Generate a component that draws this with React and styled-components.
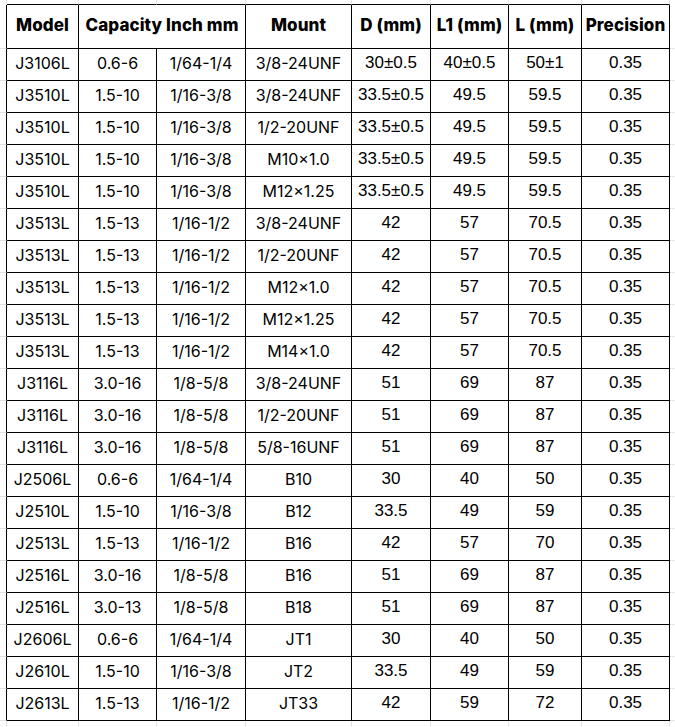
import React from 'react';
import styled, { createGlobalStyle } from 'styled-components';

const GlobalStyle = createGlobalStyle`
  html, body {
    margin: 0;
    padding: 0;
    background: #fff;
  }
`;

const widths = [7, 72, 78, 89, 106, 79, 78, 73, 88, 5];

const rows = [
  ['J3106L', '0.6-6', '1/64-1/4', '3/8-24UNF', '30±0.5', '40±0.5', '50±1'],
  ['J3510L', '1.5-10', '1/16-3/8', '3/8-24UNF', '33.5±0.5', '49.5', '59.5'],
  ['J3510L', '1.5-10', '1/16-3/8', '1/2-20UNF', '33.5±0.5', '49.5', '59.5'],
  ['J3510L', '1.5-10', '1/16-3/8', 'M10×1.0', '33.5±0.5', '49.5', '59.5'],
  ['J3510L', '1.5-10', '1/16-3/8', 'M12×1.25', '33.5±0.5', '49.5', '59.5'],
  ['J3513L', '1.5-13', '1/16-1/2', '3/8-24UNF', '42', '57', '70.5'],
  ['J3513L', '1.5-13', '1/16-1/2', '1/2-20UNF', '42', '57', '70.5'],
  ['J3513L', '1.5-13', '1/16-1/2', 'M12×1.0', '42', '57', '70.5'],
  ['J3513L', '1.5-13', '1/16-1/2', 'M12×1.25', '42', '57', '70.5'],
  ['J3513L', '1.5-13', '1/16-1/2', 'M14×1.0', '42', '57', '70.5'],
  ['J3116L', '3.0-16', '1/8-5/8', '3/8-24UNF', '51', '69', '87'],
  ['J3116L', '3.0-16', '1/8-5/8', '1/2-20UNF', '51', '69', '87'],
  ['J3116L', '3.0-16', '1/8-5/8', '5/8-16UNF', '51', '69', '87'],
  ['J2506L', '0.6-6', '1/64-1/4', 'B10', '30', '40', '50'],
  ['J2510L', '1.5-10', '1/16-3/8', 'B12', '33.5', '49', '59'],
  ['J2513L', '1.5-13', '1/16-1/2', 'B16', '42', '57', '70'],
  ['J2516L', '3.0-16', '1/8-5/8', 'B16', '51', '69', '87'],
  ['J2516L', '3.0-13', '1/8-5/8', 'B18', '51', '69', '87'],
  ['J2606L', '0.6-6', '1/64-1/4', 'JT1', '30', '40', '50'],
  ['J2610L', '1.5-10', '1/16-3/8', 'JT2', '33.5', '49', '59'],
  ['J2613L', '1.5-13', '1/16-1/2', 'JT33', '42', '59', '72'],
];

const Sheet = styled.table`
  border-collapse: separate;
  border-spacing: 0;
  table-layout: fixed;
  width: 675px;
`;

const Gutter = styled.td`
  box-sizing: border-box;
  padding: 0;
  height: ${(p) => p.$h}px;
  border-right: 1px solid ${(p) => p.$right || 'transparent'};
  border-bottom: 1px solid ${(p) => p.$bottom || 'transparent'};
`;

const HeadCell = styled.th`
  box-sizing: border-box;
  height: 44px;
  padding: 0 0 3px;
  border-right: 1px solid #000;
  border-bottom: 1px solid #000;
  font-family: Inter, 'Liberation Sans', sans-serif;
  font-weight: 800;
  font-size: 17px;
  letter-spacing: 0.1px;
  color: #000;
  text-align: center;
  vertical-align: middle;
  white-space: nowrap;
  overflow: hidden;
`;

const Cell = styled.td`
  box-sizing: border-box;
  height: 32px;
  padding: 0 0 3px;
  border-right: 1px solid #000;
  border-bottom: 1px solid #000;
  font-family: ${(p) =>
    p.$plain
      ? "'Liberation Sans', Arial, sans-serif"
      : "Inter, 'Liberation Sans', sans-serif"};
  font-size: ${(p) => (p.$plain ? 17 : 16)}px;
  color: #000;
  text-align: center;
  vertical-align: middle;
  white-space: nowrap;
  overflow: hidden;
`;

const GRID = '#e2e2e2';

const App = () => {
  const heads = ['D (mm)', 'L1 (mm)', 'L (mm)', 'Precision'];
  return (
    <>
      <GlobalStyle />
      <Sheet>
        <colgroup>
          {widths.map((w, i) => (
            <col key={i} style={{ width: w }} />
          ))}
        </colgroup>
        <tbody>
          <tr>
            <Gutter $h={5} $right={GRID} />
            {widths.slice(1, 9).map((_, i) => (
              <Gutter key={i} $h={5} $right={GRID} $bottom='#000' />
            ))}
            <Gutter $h={5} />
          </tr>
          <tr>
            <Gutter $h={44} $right='#000' $bottom={GRID} />
            <HeadCell>Model</HeadCell>
            <HeadCell colSpan={2}>Capacity Inch mm</HeadCell>
            <HeadCell>Mount</HeadCell>
            {heads.map((h) => (
              <HeadCell key={h}>{h}</HeadCell>
            ))}
            <Gutter $h={44} $bottom={GRID} />
          </tr>
          {rows.map((r, i) => (
            <tr key={i}>
              <Gutter $h={32} $right='#000' $bottom={GRID} />
              {r.map((v, j) => (
                <Cell key={j} $plain={j >= 4}>
                  {v}
                </Cell>
              ))}
              <Cell $plain>0.35</Cell>
              <Gutter $h={32} $bottom={GRID} />
            </tr>
          ))}
          <tr>
            <Gutter $h={6} $right={GRID} />
            {widths.slice(1, 9).map((_, i) => (
              <Gutter key={i} $h={6} $right={GRID} />
            ))}
            <Gutter $h={6} />
          </tr>
        </tbody>
      </Sheet>
    </>
  );
};

export default App;
